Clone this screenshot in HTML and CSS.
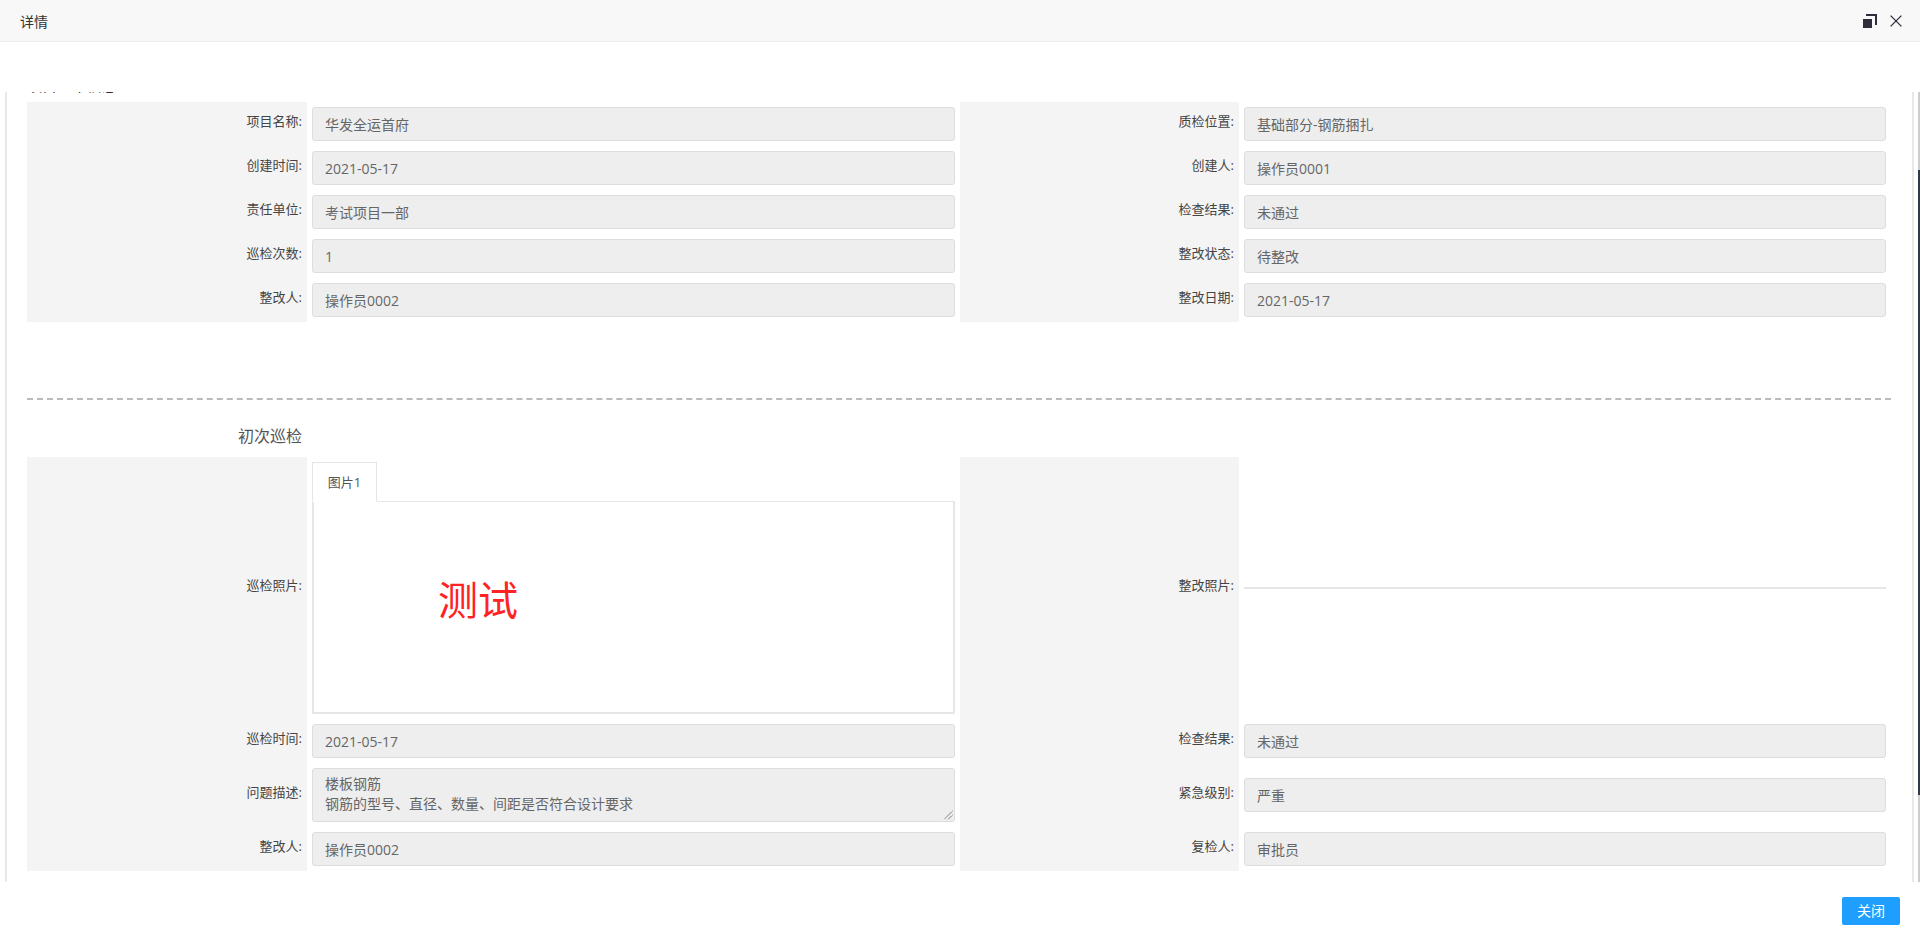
FILE: index.html
```html
<!DOCTYPE html>
<html lang="zh-CN">
<head>
<meta charset="utf-8">
<title>详情</title>
<link rel="stylesheet" href="styles.css">
</head>
<body>
<div class="layer">
  <header class="layer-title">
    <span class="title-text">详情</span>
    <div class="title-tools">
      <svg class="icon-restore" width="14" height="14" viewBox="0 0 14 14"><path d="M3 0h11v11h-2V2H3z" fill="#2e2d3c"/><rect x="0" y="5" width="9" height="9" fill="#2e2d3c"/></svg>
      <svg class="icon-close" width="12" height="12" viewBox="0 0 12 12"><path d="M.6.6l10.8 10.8M11.4.6L.6 11.4" stroke="#2e2d3c" stroke-width="1.3" fill="none"/></svg>
    </div>
  </header>
  <main class="layer-body">
    <div class="scroller">
      <div class="clipped-heading">项目基本信息</div>
      <section class="form-grid first">
        <div class="label">项目名称:</div><div class="field"><div class="input">华发全运首府</div></div>
        <div class="label">质检位置:</div><div class="field"><div class="input">基础部分-钢筋捆扎</div></div>
        <div class="label">创建时间:</div><div class="field"><div class="input">2021-05-17</div></div>
        <div class="label">创建人:</div><div class="field"><div class="input">操作员0001</div></div>
        <div class="label">责任单位:</div><div class="field"><div class="input">考试项目一部</div></div>
        <div class="label">检查结果:</div><div class="field"><div class="input">未通过</div></div>
        <div class="label">巡检次数:</div><div class="field"><div class="input">1</div></div>
        <div class="label">整改状态:</div><div class="field"><div class="input">待整改</div></div>
        <div class="label">整改人:</div><div class="field"><div class="input">操作员0002</div></div>
        <div class="label">整改日期:</div><div class="field"><div class="input">2021-05-17</div></div>
      </section>
      <hr class="divider">
      <h3 class="section-title">初次巡检</h3>
      <section class="form-grid">
        <div class="label">巡检照片:</div>
        <div class="field photo-field">
          <div class="tabs"><div class="tab">图片1</div></div>
          <div class="tab-content"><span class="photo-text">测试</span></div>
        </div>
        <div class="label">整改照片:</div>
        <div class="field"><div class="empty-photo"></div></div>
        <div class="label">巡检时间:</div><div class="field"><div class="input">2021-05-17</div></div>
        <div class="label">检查结果:</div><div class="field"><div class="input">未通过</div></div>
        <div class="label">问题描述:</div>
        <div class="field"><div class="input textarea">楼板钢筋<br>钢筋的型号、直径、数量、间距是否符合设计要求<svg class="resizer" width="10" height="10" viewBox="0 0 10 10"><path d="M9.5 1L1 9.5M9.5 5L5 9.5" stroke="#555" stroke-width="1" stroke-dasharray="1 .5" fill="none"/></svg></div></div>
        <div class="label">紧急级别:</div><div class="field"><div class="input">严重</div></div>
        <div class="label">整改人:</div><div class="field"><div class="input">操作员0002</div></div>
        <div class="label">复检人:</div><div class="field"><div class="input">审批员</div></div>
      </section>
    </div>
    <div class="scroll-track"><div class="scroll-thumb"></div></div>
  </main>
  <footer class="layer-footer"><a class="btn">关闭</a></footer>
</div>
</body>
</html>
```
FILE: styles.css
```css
* { box-sizing: border-box; }
html, body { margin: 0; height: 100%; background: #fff; overflow: hidden; }
body { font-family: "Open Sans", "Noto Sans CJK SC", sans-serif; color: #333; }
.layer { height: 937px; display: flex; flex-direction: column; }
.layer-title { height: 42px; flex: none; display: flex; align-items: center; justify-content: space-between; padding: 0 18px 0 20px; background: #f8f8f8; border-bottom: 1px solid #eee; }
.title-text { font-size: 14px; color: #333; }
.title-tools { display: flex; align-items: center; gap: 13px; }
.title-tools svg { display: block; }
.layer-body { position: relative; flex: none; height: 840px; padding: 50px 6px 0 5px; }
.scroller { height: 790px; overflow: hidden; border-left: 2px solid #e8e8e8; border-right: 2px solid #e8e8e8; padding-left: 20px; }
.clipped-heading { height: 10px; margin-top: -17px; margin-bottom: 17px; font-size: 15px; line-height: 20px; color: #333; }
.form-grid { display: grid; grid-template-columns: 280px 653px 279px 652px; }
.form-grid .label { display: flex; align-items: center; justify-content: flex-end; padding: 0 5px 7px 0; background: #f4f4f4; font-size: 13px; color: #444; }
.form-grid .field { padding: 5px; display: flex; flex-direction: column; justify-content: center; min-width: 0; }
.input { height: 34px; background: #eee; border: 1px solid #ddd; border-radius: 3px; padding: 0 12px; font-size: 14px; line-height: 34px; color: #666; }
.textarea { position: relative; height: 54px; line-height: 20px; padding: 5px 12px; }
.resizer { position: absolute; right: 1px; bottom: 1px; }
.divider { margin: 76px 0 0; height: 0; border: 0; border-top: 2px dashed #bbb; width: 1864px; }
.section-title { margin: 24px 0 9px; width: 275px; text-align: right; font-weight: 400; font-size: 16px; line-height: 24px; color: #555; }
.photo-field { height: 262px; justify-content: flex-start; padding-top: 4px; }
.tabs { height: 40px; flex: none; border-bottom: 1px solid #e6e6e6; display: flex; }
.tab { width: 65px; height: 40px; background: #fff; border: 1px solid #e6e6e6; border-bottom: 1px solid #fff; font-size: 13px; line-height: 38px; text-align: center; color: #555; }
.tab-content { flex: none; height: 212px; border: 2px solid #e6e6e6; border-top: 0; position: relative; display: flex; align-items: center; }
.photo-text { margin-left: 124px; margin-top: -14px; font-size: 40px; line-height: 46px; color: #f22; }
.empty-photo { height: 2px; background: #e6e6e6; }
.scroll-track { position: absolute; right: 0; top: 50px; width: 2px; height: 790px; background: #ccc; }
.scroll-thumb { margin-top: 78px; height: 625px; background: #2f3b4b; }
.layer-footer { flex: 1; display: flex; justify-content: flex-end; align-items: flex-start; padding: 15px 20px 0 0; }
.btn { width: 58px; height: 28px; border-radius: 2px; background: #1e9fff; color: #fff; font-size: 14px; line-height: 28px; text-align: center; }
```
